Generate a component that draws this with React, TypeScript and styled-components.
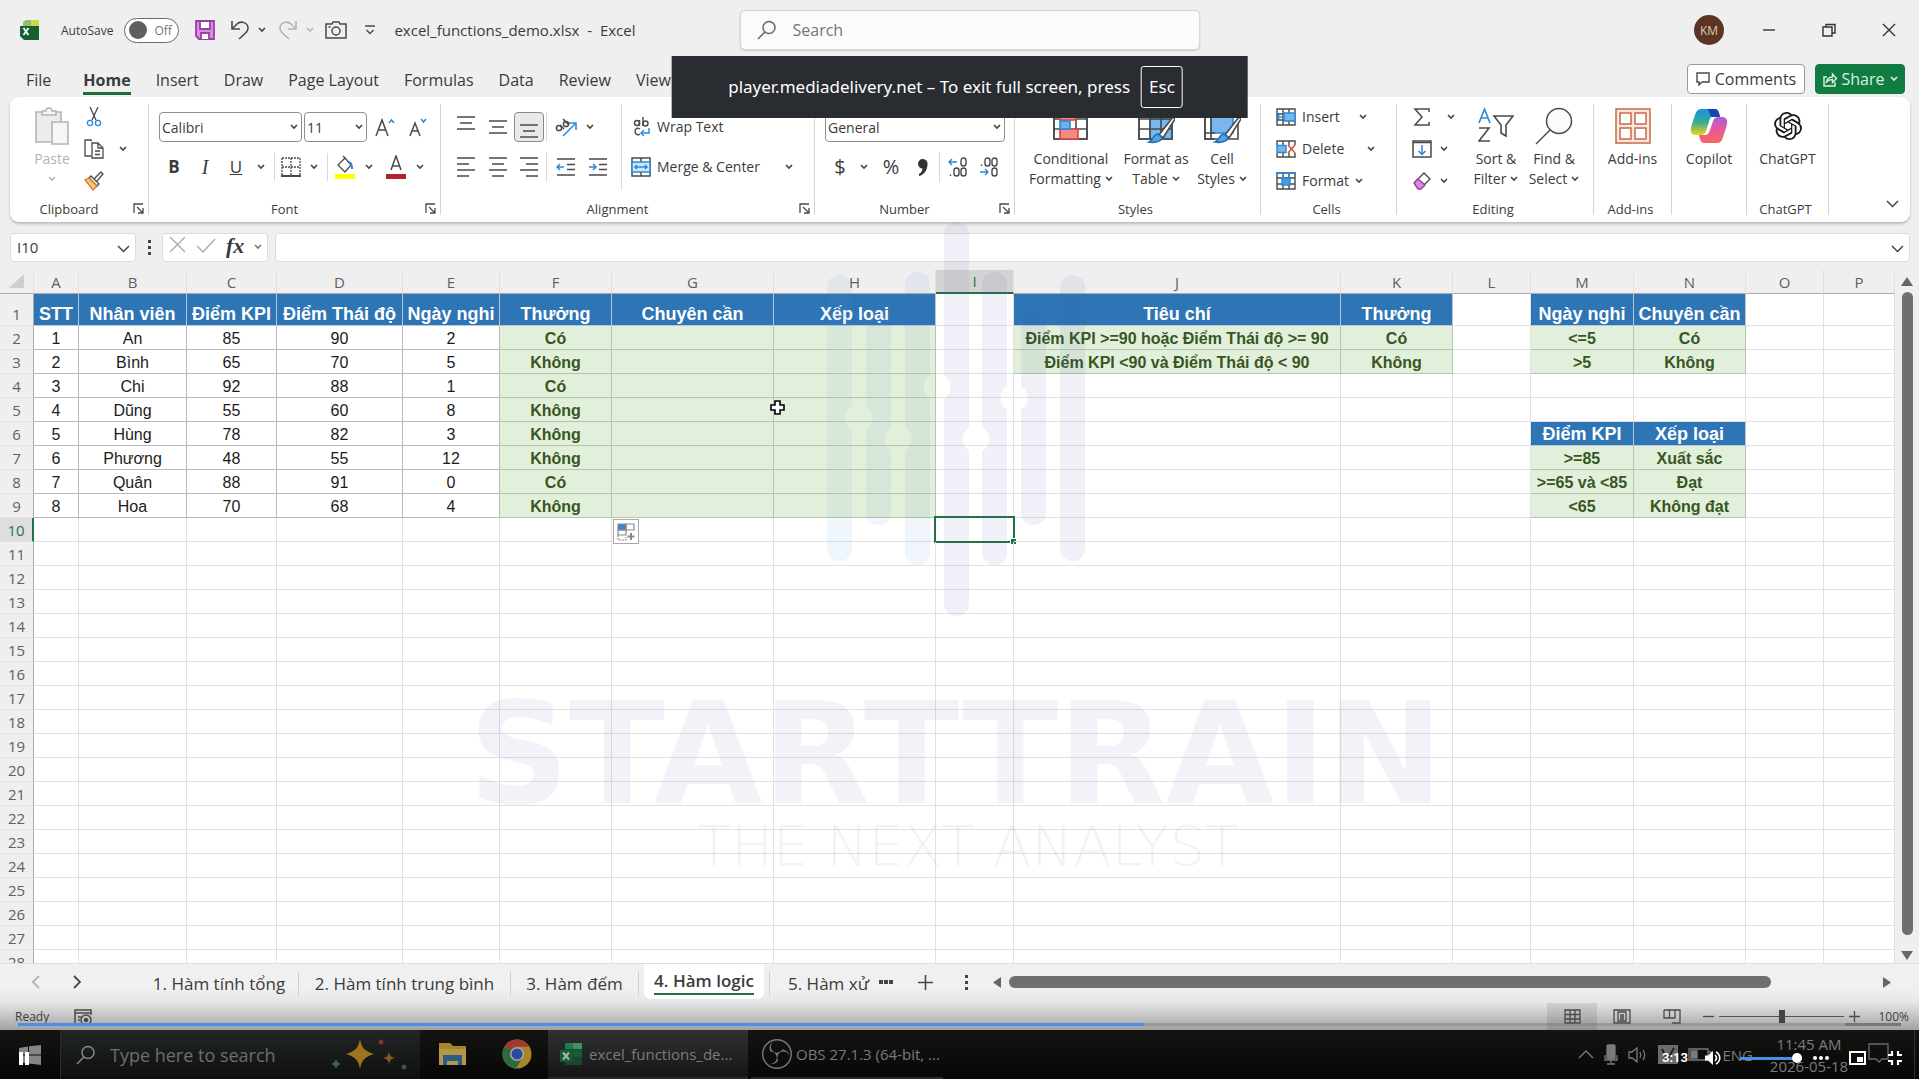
import React from 'react';
import styled, { createGlobalStyle, css } from 'styled-components';
import { SiOpenai, SiObsstudio } from 'react-icons/si';

const UI = '"Open Sans", "Noto Sans", sans-serif';
const CELL = '"Liberation Sans", Arial, sans-serif';
const INK = '#3b3b3b';
const BLUE = '#2b88d8';

const Global = createGlobalStyle`
  *, *::before, *::after { box-sizing: border-box; }
  html, body { margin: 0; padding: 0; }
  body { overflow: hidden; background: #efefef; }
  button, input, select { font: inherit; color: inherit; margin: 0; padding: 0; }
  button { border: 0; background: none; cursor: default; }
  svg { flex-shrink: 0; }
`;

const Screen = styled.div`
  position: relative;
  display: flex;
  flex-direction: column;
  height: 100vh;
  overflow: hidden;
  font-family: ${UI};
  color: ${INK};
  background: #efefef;
`;

/* ---------- title bar ---------- */
const TitleBar = styled.header`
  display: flex;
  align-items: center;
  flex: 0 0 60px;
  padding-left: 20px;
`;
const TitleSide = styled.div<{ $end?: boolean }>`
  display: flex;
  align-items: center;
  flex: 1 1 0;
  justify-content: ${(p) => (p.$end ? 'flex-end' : 'flex-start')};
`;
const AutoSave = styled.label`
  display: flex;
  align-items: center;
  gap: 11px;
  margin: 0 9px 0 17px;
  font-size: 12px;
`;
const Track = styled.span`
  position: relative;
  display: flex;
  align-items: center;
  gap: 7px;
  width: 55px;
  height: 25px;
  padding-left: 4px;
  border: 1px solid #6a6a6a;
  border-radius: 13px;
  background: #fff;
  font-size: 12px;
  color: #777;
`;
const TrackInput = styled.input`
  position: absolute;
  inset: 0;
  opacity: 0;
`;
const Knob = styled.span`
  width: 18px;
  height: 18px;
  border-radius: 50%;
  background: #5f5f5f;
`;
const IconButton = styled.button<{ $w?: number; $h?: number; $on?: boolean }>`
  display: flex;
  align-items: center;
  justify-content: center;
  flex: 0 0 ${(p) => p.$w ?? 30}px;
  height: ${(p) => p.$h ?? 30}px;
  ${(p) =>
    p.$on &&
    css`
      border: 1px solid #8a8a8a;
      border-radius: 4px;
      background: #e9e9e9;
    `}
`;
const FileName = styled.span`
  margin-left: 9px;
  font-size: 15px;
  white-space: pre;
`;
const SearchBox = styled.label`
  display: flex;
  align-items: center;
  gap: 16px;
  flex: 0 1 460px;
  height: 40px;
  padding: 0 16px;
  border: 1px solid #d6d6d6;
  border-radius: 5px;
  background: #fbfbfb;
  box-shadow: 0 1px 2px rgba(0, 0, 0, 0.15);
`;
const SearchInput = styled.input<{ $dark?: boolean }>`
  flex: 1;
  min-width: 0;
  border: 0;
  outline: 0;
  background: none;
  font-size: ${(p) => (p.$dark ? 18 : 16)}px;
  &::placeholder {
    color: ${(p) => (p.$dark ? '#6e6e6e' : '#767676')};
    opacity: 1;
  }
`;
const Avatar = styled.span`
  display: flex;
  align-items: center;
  justify-content: center;
  width: 30px;
  height: 30px;
  margin-right: 15px;
  border-radius: 50%;
  background: #5c3424;
  color: #d9c8bd;
  font-size: 12px;
`;

/* ---------- ribbon tabs ---------- */
const TabRow = styled.nav`
  display: flex;
  align-items: flex-end;
  flex: 0 0 37px;
  padding: 0 14px 2px;
`;
const RibbonTab = styled.button<{ $active?: boolean; $first?: boolean }>`
  padding: 0 12px;
  margin-right: ${(p) => (p.$first ? 8 : 1)}px;
  font-size: 16px;
  line-height: 24px;
  font-weight: ${(p) => (p.$active ? 700 : 400)};
  white-space: nowrap;
  span {
    display: block;
    border-bottom: 3px solid ${(p) => (p.$active ? '#1e6b3c' : 'transparent')};
  }
`;
const Actions = styled.div`
  display: flex;
  gap: 10px;
  margin-left: auto;
`;
const ActionButton = styled.button<{ $primary?: boolean }>`
  display: flex;
  align-items: center;
  justify-content: center;
  gap: 5px;
  width: ${(p) => (p.$primary ? 90 : 118)}px;
  height: 30px;
  margin-bottom: 1px;
  border: 1px solid ${(p) => (p.$primary ? '#107c41' : '#9a9a9a')};
  border-radius: 4px;
  background: ${(p) => (p.$primary ? '#107c41' : '#fff')};
  color: ${(p) => (p.$primary ? '#d9f2e2' : INK)};
  font-size: 16px;
`;

/* ---------- ribbon ---------- */
const Ribbon = styled.section`
  display: flex;
  flex: 0 0 125px;
  margin: 0 9px 0 10px;
  padding: 7px 0;
  border-radius: 9px;
  background: #fff;
  box-shadow: 0 2px 3px rgba(0, 0, 0, 0.22);
`;
const Group = styled.div<{ $w: number }>`
  display: flex;
  flex-direction: column;
  flex: 0 0 ${(p) => p.$w}px;
  border-right: 1px solid #d4d4d4;
`;
const GroupBody = styled.div<{ $pad?: number; $center?: boolean }>`
  display: flex;
  flex: 1;
  padding-left: ${(p) => p.$pad ?? 0}px;
  justify-content: ${(p) => (p.$center ? 'center' : 'flex-start')};
`;
const GroupFoot = styled.div`
  display: flex;
  align-items: center;
  gap: 5px;
  height: 12px;
  padding-right: 4px;
  font-size: 13px;
  line-height: 12px;
  span {
    flex: 1;
    text-align: center;
  }
`;
const Two = styled.div`
  display: flex;
  flex-direction: column;
  gap: 10px;
  padding-top: 8px;
`;
const Three = styled.div`
  display: flex;
  flex-direction: column;
  gap: 6px;
`;
const Line = styled.div<{ $h?: number; $gap?: number }>`
  display: flex;
  align-items: center;
  height: ${(p) => p.$h ?? 30}px;
  gap: ${(p) => p.$gap ?? 0}px;
`;
const Rule = styled.i<{ $h?: number; $m?: number }>`
  width: 1px;
  height: ${(p) => p.$h ?? 30}px;
  margin: 0 ${(p) => p.$m ?? 3}px;
  background: #d9d9d9;
`;
const ComboBox = styled.span<{ $w: number }>`
  position: relative;
  width: ${(p) => p.$w}px;
  height: 30px;
  svg {
    position: absolute;
    right: 4px;
    top: 12px;
    pointer-events: none;
  }
`;
const Combo = styled.select`
  appearance: none;
  width: 100%;
  height: 100%;
  padding: 0 2px;
  border: 1px solid #8f8f8f;
  border-radius: 4px;
  background: #fff;
  font-size: 14px;
  outline: 0;
`;
const TextButton = styled.button`
  display: flex;
  align-items: center;
  gap: 6px;
  font-size: 14px;
  line-height: 26px;
  white-space: nowrap;
`;
const BigButton = styled.button<{ $w: number; $faded?: boolean }>`
  display: flex;
  flex-direction: column;
  align-items: center;
  width: ${(p) => p.$w}px;
  padding-top: 4px;
  font-size: 14px;
  line-height: 20px;
  white-space: nowrap;
  color: ${(p) => (p.$faded ? '#b3b3b3' : INK)};
`;
const BigIcon = styled.span`
  display: flex;
  align-items: center;
  justify-content: center;
  height: 36px;
  margin-bottom: 5px;
`;
const BigLine = styled.span`
  display: flex;
  align-items: center;
  gap: 4px;
  height: 20px;
`;
const Glyph = styled.span<{ $b?: boolean; $i?: boolean; $u?: boolean; $size?: number }>`
  font-size: ${(p) => p.$size ?? 17}px;
  line-height: 20px;
  font-weight: ${(p) => (p.$b ? 700 : 400)};
  font-style: ${(p) => (p.$i ? 'italic' : 'normal')};
  font-family: ${(p) => (p.$i ? '"Liberation Serif", serif' : UI)};
  text-decoration: ${(p) => (p.$u ? 'underline' : 'none')};
`;
const Collapse = styled.button`
  align-self: flex-end;
  margin: 0 11px 2px auto;
`;

/* ---------- formula bar ---------- */
const FormulaRow = styled.div`
  display: flex;
  align-items: center;
  flex: 0 0 48px;
  padding: 2px 9px 0 10px;
`;
const Field = styled.div<{ $w?: number; $m?: number }>`
  display: flex;
  align-items: center;
  flex: ${(p) => (p.$w ? `0 0 ${p.$w}px` : '1 1 0')};
  min-width: 0;
  height: 29px;
  margin-right: ${(p) => p.$m ?? 0}px;
  padding: 0 5px 0 6px;
  border: 1px solid #dcdcdc;
  border-radius: 4px;
  background: #fff;
`;
const FieldInput = styled.input`
  flex: 1;
  min-width: 0;
  border: 0;
  outline: 0;
  background: none;
  font-size: 15px;
`;
const Dots = styled.span`
  display: flex;
  flex-direction: column;
  gap: 3px;
  i {
    width: 3px;
    height: 3px;
    background: #444;
  }
`;
const DotsSlot = styled.span<{ $w?: number }>`
  display: flex;
  justify-content: center;
  flex: 0 0 ${(p) => p.$w ?? 26}px;
`;

/* ---------- sheet ---------- */
const SheetArea = styled.main`
  display: flex;
  flex: 1 1 0;
  min-height: 0;
`;
const SheetView = styled.div`
  position: relative;
  flex: 1;
  min-width: 0;
  overflow: hidden;
  background: #fff;
`;
const Sheet = styled.table`
  width: 100%;
  table-layout: fixed;
  border-collapse: separate;
  border-spacing: 0;
`;
const ColHead = styled.th<{ $sel?: boolean }>`
  height: 24px;
  padding: 0;
  background: ${(p) => (p.$sel ? '#d3d3d3' : '#efefef')};
  color: ${(p) => (p.$sel ? '#217346' : '#5f5f5f')};
  border-right: 1px solid #e0e0e0;
  border-bottom: ${(p) => (p.$sel ? '2px solid #217346' : '1px solid #ababab')};
  font: 400 15px/22px ${UI};
`;
const RowHead = styled.th<{ $sel?: boolean; $tall?: boolean }>`
  height: ${(p) => (p.$tall ? 32 : 24)}px;
  padding: 0;
  background: ${(p) => (p.$sel ? '#dedede' : '#efefef')};
  color: ${(p) => (p.$sel ? '#217346' : '#5f5f5f')};
  border-right: ${(p) => (p.$sel ? '2px solid #217346' : '1px solid #ababab')};
  border-bottom: 1px solid #e2e2e2;
  font: 400 15px/22px ${UI};
  vertical-align: ${(p) => (p.$tall ? 'bottom' : 'middle')};
`;
type Kind = 'blank' | 'plain' | 'head' | 'green';
const Cell = styled.td<{ $kind: Kind; $tall?: boolean }>`
  position: relative;
  padding: 0;
  border-right: 1px solid #e1e1e1;
  border-bottom: 1px solid #e1e1e1;
  font: 400 16px/22px ${CELL};
  color: #1b1b1b;
  text-align: center;
  vertical-align: ${(p) => (p.$tall ? 'bottom' : 'middle')};
  white-space: nowrap;
  ${(p) =>
    p.$kind === 'plain' &&
    css`
      padding-top: 2px;
      line-height: 21px;
      border-color: #b9b9b9;
    `}
  ${(p) =>
    p.$kind === 'head' &&
    css`
      border-color: #b7c7d8;
      background: #2e75b6;
      color: #fff;
      font-size: 18px;
      font-weight: 700;
    `}
  ${(p) =>
    p.$kind === 'green' &&
    css`
      padding-top: 2px;
      line-height: 21px;
      border-color: #b8c4b2;
      background: #e2efda;
      color: #375623;
      font-weight: 700;
    `}
`;
const Selection = styled.span`
  position: absolute;
  inset: -2px;
  border: 2px solid #217346;
  &::after {
    content: '';
    position: absolute;
    right: -3px;
    bottom: -3px;
    width: 6px;
    height: 6px;
    border-top: 1px solid #fff;
    border-left: 1px solid #fff;
    background: #217346;
  }
`;
const PasteTag = styled.span`
  position: absolute;
  left: 1px;
  top: 1px;
  z-index: 1;
  display: flex;
  width: 26px;
  height: 25px;
  align-items: center;
  justify-content: center;
  border: 1px solid #a9a9a9;
  background: #fff;
`;
const Pointer = styled.svg`
  position: absolute;
  left: -5px;
  top: 1px;
  z-index: 2;
`;
const VScroll = styled.div`
  display: flex;
  flex-direction: column;
  align-items: center;
  flex: 0 0 24px;
  padding: 7px 0 3px;
`;
const VThumb = styled.div`
  flex: 1;
  width: 11px;
  margin: 6px 0 16px;
  border-radius: 6px;
  background: #6f6f6f;
`;

/* ---------- sheet tabs ---------- */
const TabsBar = styled.div`
  display: flex;
  align-items: flex-start;
  flex: 0 0 40px;
  background: linear-gradient(#f0f0f0 60%, #e6e6e6);
  border-top: 1px solid #dedede;
`;
const NavPair = styled.div`
  display: flex;
  padding: 3px 0 0 15px;
  width: 140px;
`;
const SheetTab = styled.button<{ $w: number; $active?: boolean }>`
  display: flex;
  align-items: center;
  justify-content: center;
  width: ${(p) => p.$w}px;
  height: ${(p) => (p.$active ? 35 : 24)}px;
  margin: ${(p) => (p.$active ? '0 5px' : '8px 0 0')};
  border-right: ${(p) => (p.$active ? '0' : '1px solid #cfcfcf')};
  border-radius: ${(p) => (p.$active ? '0 0 6px 6px' : '0')};
  background: ${(p) => (p.$active ? '#fff' : 'none')};
  font-size: 17px;
  line-height: 24px;
  font-weight: ${(p) => (p.$active ? 600 : 400)};
  white-space: nowrap;
  span {
    border-bottom: ${(p) => (p.$active ? '2px solid #217346' : '0')};
  }
`;
const CutTab = styled.button`
  height: 24px;
  margin-top: 8px;
  padding-left: 18px;
  border-left: 1px solid #cfcfcf;
  font-size: 17px;
  line-height: 24px;
  white-space: nowrap;
`;
const TabTools = styled.div`
  display: flex;
  align-items: center;
  flex: 1;
  height: 36px;
`;
const HTrack = styled.div`
  flex: 1;
  margin: 0 8px;
`;
const HThumb = styled.div`
  width: 88%;
  height: 12px;
  border-radius: 6px;
  background: #6f6f6f;
`;

/* ---------- status bar ---------- */
const StatusBar = styled.footer`
  display: flex;
  align-items: center;
  flex: 0 0 27px;
  padding: 0 10px 0 15px;
  background: linear-gradient(#e4e4e4, #bdbdbd 60%, #a2a2a2);
  font-size: 12px;
  color: #3d3d3d;
  gap: 25px;
`;
const Views = styled.div`
  display: flex;
  align-items: center;
  height: 27px;
  margin-left: auto;
`;
const ViewButton = styled.button<{ $on?: boolean }>`
  display: flex;
  align-items: center;
  justify-content: center;
  width: 50px;
  height: 27px;
  background: ${(p) => (p.$on ? 'rgba(0,0,0,.09)' : 'none')};
`;
const Zoom = styled.label`
  display: flex;
  align-items: center;
  gap: 5px;
`;
const ZoomRange = styled.input`
  appearance: none;
  width: 125px;
  height: 14px;
  background: linear-gradient(#555, #555) center / 100% 1px no-repeat;
  &::-webkit-slider-thumb {
    appearance: none;
    width: 6px;
    height: 13px;
    background: #444;
  }
`;
const ZoomValue = styled.span`
  margin-left: 13px;
`;

/* ---------- taskbar ---------- */
const Taskbar = styled.div`
  display: flex;
  flex: 0 0 49px;
  background: linear-gradient(#141412, #070707);
  color: #7b7b7b;
`;
const StartButton = styled.button`
  flex: 0 0 60px;
  display: flex;
  align-items: center;
  justify-content: center;
`;
const TaskSearch = styled.label`
  display: flex;
  align-items: center;
  gap: 14px;
  flex: 0 0 360px;
  min-width: 0;
  padding: 0 13px 0 15px;
  border-left: 1px solid #2a2c2c;
  background: linear-gradient(#232626, #0e0f0f);
`;
const TaskButton = styled.button<{ $w: number; $active?: boolean; $left?: boolean }>`
  display: flex;
  align-items: center;
  justify-content: ${(p) => (p.$left ? 'flex-start' : 'center')};
  gap: ${(p) => (p.$active ? 6 : 4)}px;
  flex: 0 0 ${(p) => p.$w}px;
  min-width: 0;
  padding: 0 ${(p) => (p.$left ? 11 : 0)}px;
  background: ${(p) => (p.$active ? 'linear-gradient(#303232, #151615)' : 'none')};
  border-bottom: 2px solid ${(p) => (p.$left ? '#242b28' : 'transparent')};
  font-size: 15px;
  white-space: nowrap;
`;
const Tray = styled.div`
  display: flex;
  align-items: center;
  margin-left: auto;
  padding-right: 4px;
  gap: 10px;
  font-size: 15px;
`;
const Clock = styled.div`
  width: 92px;
  text-align: center;
  line-height: 22px;
`;
const TrayEnd = styled.div`
  height: 49px;
  padding: 13px 25px 0 3px;
  border-right: 1px solid #333;
`;

/* ---------- video player layer ---------- */
const Watermark = styled.div`
  position: absolute;
  top: 222px;
  left: 0;
  right: 0;
  display: flex;
  flex-direction: column;
  align-items: center;
  padding-right: 7px;
  color: rgba(62, 78, 170, 0.065);
  pointer-events: none;
  font-family: 'DejaVu Sans', sans-serif;
  white-space: nowrap;
`;
const MarkName = styled.div`
  margin-top: 72px;
  font-size: 140px;
  line-height: 134px;
  font-weight: 700;
`;
const MarkLine = styled.div`
  padding-left: 24px;
  font-size: 56px;
  line-height: 48px;
  font-weight: 200;
`;
const Toast = styled.div`
  position: absolute;
  top: 56px;
  left: 50%;
  transform: translateX(-50%);
  display: flex;
  align-items: center;
  gap: 11px;
  height: 62px;
  padding: 0 65px 0 57px;
  background: #292c31;
  color: #fff;
  font: 400 17px/24px 'Noto Sans', 'Open Sans', sans-serif;
  white-space: nowrap;
  kbd {
    display: flex;
    align-items: center;
    height: 42px;
    padding: 0 7px;
    border: 1px solid #fff;
    border-radius: 3px;
    font: inherit;
  }
`;
const Seek = styled.div`
  position: absolute;
  left: 18px;
  right: 18px;
  bottom: 53px;
  height: 3px;
  background: linear-gradient(90deg, rgba(90, 90, 90, 0.25) 97%, #777 97%);
`;
const Played = styled.div`
  height: 3px;
  background: #4a8fe7;
`;
const Player = styled.div`
  position: absolute;
  left: 18px;
  right: 17px;
  bottom: 12px;
  display: flex;
  align-items: center;
  height: 18px;
  color: #fff;
  font: 700 13px/18px Roboto, sans-serif;
`;
const PlayerButton = styled.button`
  display: flex;
`;
const PlayerRight = styled.div`
  display: flex;
  align-items: center;
  margin-left: auto;
`;
const Volume = styled.input`
  appearance: none;
  width: 62px;
  height: 12px;
  margin: 0 11px 0 19px;
  background: linear-gradient(#4a8fe7, #4a8fe7) center / 100% 3px no-repeat;
  &::-webkit-slider-thumb {
    appearance: none;
    width: 10px;
    height: 10px;
    border-radius: 50%;
    background: #fff;
  }
`;
const Gap = styled.i<{ $w: number }>`
  width: ${(p) => p.$w}px;
`;

/* ---------- icons ---------- */
type IconProps = { w: number; h?: number; c?: string; s?: number; children: React.ReactNode };
const Icon = ({ w, h, c = '#4a4a4a', s = 1.3, children }: IconProps) => (
  <svg width={w} height={h ?? w} viewBox={`0 0 ${w} ${h ?? w}`} fill="none" stroke={c} strokeWidth={s} aria-hidden="true">
    {children}
  </svg>
);
const Chev = ({ c = '#444', big = false }: { c?: string; big?: boolean }) =>
  big ? (
    <Icon w={13} h={8} c={c} s={1.5}><path d="M1 1l5.500 5.500L12 1" /></Icon>
  ) : (
    <Icon w={8} h={6} c={c} s={1.6}><path d="M1 1l3 3 3-3" /></Icon>
  );
const Drop = ({ w = 18, label, c }: { w?: number; label: string; c?: string }) => (
  <IconButton $w={w} $h={26} aria-label={label}><Chev c={c} /></IconButton>
);
const Launcher = () => (
  <button aria-label="Dialog launcher">
    <Icon w={11} h={11}><path d="M1 10V1h9M4 4l6 6M10 5v5H5" /></Icon>
  </button>
);
const Excel = ({ dim }: { dim?: boolean }) => (
  <svg width="24" height="26" viewBox="0 0 24 26" opacity={dim ? 0.65 : 1} aria-hidden="true">
    <path d="M6 2h9v6H6z" fill="#21a366" /><path d="M14 2h9v7h-9z" fill="#4fc878" />
    <path d="M6 8h17v16H6z" fill="#185c37" /><path d="M14 9h9v7h-9z" fill="#107c41" />
    <path d="M1 9h12v12H1z" fill="#107c41" /><path d="M4 11.500l6 7M10 11.500l-6 7" stroke="#fff" strokeWidth="2" />
  </svg>
);
const TitleExcel = () => (
  <svg width="24" height="26" viewBox="0 0 24 26" aria-hidden="true">
    <path d="M3 5l3-2h11l2 3v5H3z" fill="#8fbf6a" /><path d="M11 3h8v6h-8z" fill="#c5dc4a" />
    <path d="M0 9h19v14H4l-4-4z" fill="#14602f" /><path d="M3.500 11l5 7M8.500 11l-5 7" stroke="#fff" strokeWidth="1.800" />
  </svg>
);
const Lines = ({ rows }: { rows: [number, number][] }) => (
  <Icon w={20} h={22} s={1.5}>
    {rows.map(([a, b], i) => <path key={i} d={`M${a} ${11 - (rows.length - 1) * 3 + i * 6}H${b}`} />)}
  </Icon>
);
const Indent = ({ dir }: { dir: 'in' | 'out' }) => (
  <Icon w={20} h={20} s={1.5}>
    <path d="M1 2h18M11 7.500h8M11 12.500h8M1 18h18" />
    <path stroke={BLUE} d={dir === 'out' ? 'M8 10H1M4 7l-3 3 3 3' : 'M1 10h7M5 7l3 3-3 3'} />
  </Icon>
);
const GridIcon = ({ kind }: { kind: 'insert' | 'delete' | 'format' }) => (
  <Icon w={20} h={20} s={1.4}>
    <path d="M1 2h18v16H1zM7 2v16M13 2v16M1 7h18M1 13h18" />
    {kind === 'insert' && <><path d="M8 6h11v8H8z" fill="#7ab5e6" stroke={BLUE} /><path d="M9 10H1M4 7l-3 3 3 3" stroke={BLUE} /></>}
    {kind === 'delete' && <><path d="M0 6h20v8H0z" fill="#fff" stroke="none" /><path d="M1 6.500h9v7H1z" fill="#7ab5e6" stroke={BLUE} /><path d="M12 6l7 8M19 6l-7 8" stroke="#d04a2b" /></>}
    {kind === 'format' && <><path d="M6 7h8v7H6z" fill="#4a9be0" stroke={BLUE} /><path d="M1 1v3M19 1v3M1 2h18" stroke={BLUE} /></>}
  </Icon>
);
const StyleGrid = ({ kind }: { kind: 'cond' | 'table' | 'cell' }) => (
  <Icon w={38} h={36} s={1.6}>
    <path d="M2 1h33v30H2z" fill="#fff" />
    {kind === 'table' && <path d="M13 11h22v20H13z" fill="#7ab5ee" stroke={BLUE} />}
    {kind === 'cell' && <path d="M8 7h22v18H8z" fill="#7ab5ee" stroke={BLUE} />}
    <path d={kind === 'cell' ? 'M2 1h33M2 1v30h10M8 1v30M2 25h10' : 'M2 1h33v30H2zM13 1v30M24 1v30M2 11h33M2 21h33'} />
    {kind === 'cond' && <><path d="M8 1h16v11H8zM8 21h18v10H8z" fill="#f38b84" stroke="#d9453b" /><path d="M8 13h10v8H8z" fill="#6fb0ea" stroke={BLUE} /></>}
    {kind !== 'cond' && (
      <><path d="M22 27L36 9l2 2-12 19z" fill="#fff" /><path d="M12 34c4 1 13 0 13-5l-4-3c-5 0-4 6-9 8z" fill="#5aa2e2" stroke="#1f6fb5" /></>
    )}
  </Icon>
);
const SearchGlyph = ({ size = 20, c = '#666' }: { size?: number; c?: string }) => (
  <svg width={size} height={size} viewBox="0 0 20 20" fill="none" stroke={c} strokeWidth="1.5" aria-hidden="true">
    <circle cx="12" cy="7.500" r="6" /><path d="M7.800 12L1 19" />
  </svg>
);
const WindowGlyph = ({ d }: { d: string }) => <Icon w={14} s={1.4} c="#333"><path d={d} /></Icon>;

/* ---------- data ---------- */
const COLS: [string, number][] = [
  ['A', 45], ['B', 108], ['C', 90], ['D', 126], ['E', 97], ['F', 112], ['G', 162], ['H', 162],
  ['I', 78], ['J', 327], ['K', 112], ['L', 78], ['M', 103], ['N', 112], ['O', 78], ['P', 0],
];
const STAFF: string[][] = [
  ['1', 'An', '85', '90', '2', 'Có'],
  ['2', 'Bình', '65', '70', '5', 'Không'],
  ['3', 'Chi', '92', '88', '1', 'Có'],
  ['4', 'Dũng', '55', '60', '8', 'Không'],
  ['5', 'Hùng', '78', '82', '3', 'Không'],
  ['6', 'Phương', '48', '55', '12', 'Không'],
  ['7', 'Quân', '88', '91', '0', 'Có'],
  ['8', 'Hoa', '70', '68', '4', 'Không'],
];
const cells: Record<string, [string, Kind]> = {};
['STT', 'Nhân viên', 'Điểm KPI', 'Điểm Thái độ', 'Ngày nghỉ', 'Thưởng', 'Chuyên cần', 'Xếp loại'].forEach((t, i) => {
  cells[`${COLS[i][0]}1`] = [t, 'head'];
});
STAFF.forEach((row, r) => {
  row.forEach((t, i) => { cells[`${COLS[i][0]}${r + 2}`] = [t, i === 5 ? 'green' : 'plain']; });
  cells[`G${r + 2}`] = ['', 'green'];
  cells[`H${r + 2}`] = ['', 'green'];
});
Object.assign(cells, {
  J1: ['Tiêu chí', 'head'], K1: ['Thưởng', 'head'],
  J2: ['Điểm KPI >=90 hoặc Điểm Thái độ >= 90', 'green'], K2: ['Có', 'green'],
  J3: ['Điểm KPI <90 và Điểm Thái độ < 90', 'green'], K3: ['Không', 'green'],
  M1: ['Ngày nghỉ', 'head'], N1: ['Chuyên cần', 'head'],
  M2: ['<=5', 'green'], N2: ['Có', 'green'],
  M3: ['>5', 'green'], N3: ['Không', 'green'],
  M6: ['Điểm KPI', 'head'], N6: ['Xếp loại', 'head'],
  M7: ['>=85', 'green'], N7: ['Xuất sắc', 'green'],
  M8: ['>=65 và <85', 'green'], N8: ['Đạt', 'green'],
  M9: ['<65', 'green'], N9: ['Không đạt', 'green'],
});
const ROWS = Array.from({ length: 28 }, (_, i) => i + 1);
const MENU = ['File', 'Home', 'Insert', 'Draw', 'Page Layout', 'Formulas', 'Data', 'Review', 'View'];

/* ---------- sections ---------- */
const Title = () => (
  <TitleBar>
    <TitleSide>
      <TitleExcel />
      <AutoSave>
        AutoSave
        <Track><TrackInput type="checkbox" role="switch" /><Knob />Off</Track>
      </AutoSave>
      <IconButton $w={34} aria-label="Save">
        <Icon w={20} c="#9b3fa5" s={1.8}><path d="M1 1h18v18H4l-3-3z" fill="#d58fdc" /><path d="M5 1h10v8H5zM6 19v-6h8v6" fill="#fff" /></Icon>
      </IconButton>
      <Gap $w={3} />
      <IconButton aria-label="Undo"><Icon w={20} s={1.6}><path d="M2 1v8h8M2 9l5-5c4-4 11-1 11 4 0 3-1 4-9 11" /></Icon></IconButton>
      <Drop w={14} label="Undo history" />
      <Gap $w={4} />
      <IconButton aria-label="Redo"><Icon w={20} s={1.6} c="#b5b5b5"><path d="M18 1v8h-8M18 9l-5-5C9 0 2 3 2 8c0 3 1 4 9 11" /></Icon></IconButton>
      <Drop w={14} label="Redo history" c="#b5b5b5" />
      <Gap $w={2} />
      <IconButton $w={34} aria-label="Camera">
        <Icon w={22} h={18} s={1.5}><path d="M1 3h6l1-2h6l1 2h6v14H1z" /><circle cx="11" cy="10" r="4" /><path d="M3.500 6h2" /></Icon>
      </IconButton>
      <Gap $w={2} />
      <IconButton aria-label="Customize toolbar"><Icon w={10} h={10} s={1.5}><path d="M0 1h10M1.500 5L5 8.500 8.500 5" /></Icon></IconButton>
      <FileName>{'excel_functions_demo.xlsx  -  Excel'}</FileName>
    </TitleSide>
    <SearchBox>
      <SearchGlyph />
      <SearchInput placeholder="Search" aria-label="Search" />
    </SearchBox>
    <TitleSide $end>
      <Avatar>KM</Avatar>
      <IconButton $w={60} aria-label="Minimize"><WindowGlyph d="M1 7h12" /></IconButton>
      <IconButton $w={60} aria-label="Restore"><WindowGlyph d="M1 4h9v9H1zM4 4V1.500h9V10h-3" /></IconButton>
      <IconButton $w={60} aria-label="Close"><WindowGlyph d="M1 1l12 12M13 1L1 13" /></IconButton>
    </TitleSide>
  </TitleBar>
);

const MenuRow = () => (
  <TabRow>
    {MENU.map((m, i) => (
      <RibbonTab key={m} $active={m === 'Home'} $first={i === 0}><span>{m}</span></RibbonTab>
    ))}
    <Actions>
      <ActionButton>
        <Icon w={14} h={14} s={1.4}><path d="M1 1h12v9H6l-3 3v-3H1z" /></Icon>Comments
      </ActionButton>
      <ActionButton $primary>
        <Icon w={14} h={15} s={1.4} c="#d9f2e2"><path d="M4 5H1v9h11v-4M3.500 10c1-4 3-5 6-5V2l4 4.500-4 4V7.500c-3 0-4 .5-6 2.500z" /></Icon>
        Share<Chev c="#d9f2e2" />
      </ActionButton>
    </Actions>
  </TabRow>
);

const Foot = ({ name, launch }: { name?: string; launch?: boolean }) => (
  <GroupFoot><span>{name}</span>{launch && <Launcher />}</GroupFoot>
);

const RibbonBar = () => (
  <Ribbon>
    <Group $w={139}>
      <GroupBody $pad={18}>
        <BigButton $w={48} $faded>
          <BigIcon>
            <Icon w={36} h={38} c="#b5b5b5" s={1.6}><path d="M2 5h25v30H2z" fill="#ececec" /><path d="M8 8V4h4c0-4 6-4 6 0h4v4z" fill="#f6f6f6" /><path d="M18 15h16v22H18z" fill="#f6f6f6" /></Icon>
          </BigIcon>
          Paste
          <BigLine><Chev c="#b5b5b5" /></BigLine>
        </BigButton>
        <Three>
          <Line $h={26}>
            <IconButton $w={36} $h={26} aria-label="Cut">
              <Icon w={16} h={20}><path d="M4 0l6 13M12 0L6 13" /><circle cx="4" cy="16" r="2.600" stroke={BLUE} /><circle cx="12" cy="16" r="2.600" stroke={BLUE} /></Icon>
            </IconButton>
          </Line>
          <Line $h={26}>
            <IconButton $w={36} $h={26} aria-label="Copy">
              <Icon w={20}><path d="M7 17H1V1h6l1 1M8 4h6l5 5v10H8zM14 4v5h5M11 12h5M11 15.500h5" /></Icon>
            </IconButton>
            <Gap $w={2} /><Drop w={18} label="Copy options" />
          </Line>
          <Line $h={26}>
            <IconButton $w={36} $h={26} aria-label="Format Painter">
              <Icon w={20}><path d="M10 8l7-7 2 2-6 7M7 5l8 8-2 2-8-8z" /><path d="M5 7L1 9l8 10 4-4z" fill="#f7c27a" stroke="#d97a1c" /></Icon>
            </IconButton>
          </Line>
        </Three>
      </GroupBody>
      <Foot name="Clipboard" launch />
    </Group>

    <Group $w={292}>
      <GroupBody $pad={10}>
        <Two>
          <Line $gap={2}>
            <ComboBox $w={143}><Combo aria-label="Font"><option>Calibri</option></Combo><Chev /></ComboBox>
            <ComboBox $w={63}><Combo aria-label="Font size"><option>11</option></Combo><Chev /></ComboBox>
            <IconButton $w={32} aria-label="Increase font size"><Icon w={20} h={20} s={1.5}><path d="M1 19L7 3l6 16M3 13h8" /><path d="M14 6l2.500-3L19 6" stroke={BLUE} /></Icon></IconButton>
            <IconButton $w={30} aria-label="Decrease font size"><Icon w={18} h={20} s={1.5}><path d="M1 19L6 6l5 13M3 14h6" /><path d="M12 2l2.500 3L17 2" stroke={BLUE} /></Icon></IconButton>
          </Line>
          <Line>
            <IconButton aria-label="Bold"><Glyph $b>B</Glyph></IconButton>
            <IconButton $w={32} aria-label="Italic"><Glyph $i $size={20}>I</Glyph></IconButton>
            <IconButton aria-label="Underline"><Glyph $u>U</Glyph></IconButton>
            <Drop w={20} label="Underline options" />
            <Rule $h={28} $m={3} />
            <IconButton $w={26} aria-label="Borders"><Icon w={20}><path d="M1 1h18v18M1 1v18M10 1v18M1 10h18" strokeDasharray="2 1" /><path d="M0 19h20" strokeWidth="2" /></Icon></IconButton>
            <Drop w={20} label="Border options" />
            <Rule $h={28} $m={3} />
            <IconButton $w={28} aria-label="Fill Color"><Icon w={20} h={24}><path d="M3 10l7-7 6 7-6 7zM8 1l4 4" /><path d="M14 7c3 1 3 4 3 7" stroke={BLUE} strokeWidth="2" /><path d="M0 19h20v5H0z" fill="#ffff00" stroke="none" /></Icon></IconButton>
            <Drop w={20} label="Fill options" />
            <Gap $w={3} />
            <IconButton $w={28} aria-label="Font Color"><Icon w={20} h={24} s={1.5}><path d="M5 15l5-14 5 14M6.500 11h7" /><path d="M0 19h20v5H0z" fill="#b5222a" stroke="none" /></Icon></IconButton>
            <Drop w={20} label="Font color options" />
          </Line>
        </Two>
      </GroupBody>
      <Foot name="Font" launch />
    </Group>

    <Group $w={374}>
      <GroupBody $pad={9}>
        <Two>
          <Line>
            <IconButton $w={32} aria-label="Top Align"><Icon w={20} h={22} s={1.5}><path d="M1 1h18M4 7h12M1 13h18" /></Icon></IconButton>
            <IconButton $w={32} aria-label="Middle Align"><Lines rows={[[1, 19], [4, 16], [1, 19]]} /></IconButton>
            <IconButton $on aria-label="Bottom Align"><Icon w={20} h={22} s={1.5}><path d="M1 9h18M4 15h12M1 21h18" /></Icon></IconButton>
            <Rule $m={2} />
            <IconButton $w={34} aria-label="Orientation"><Icon w={22} h={20} s={1.5}><circle cx="4" cy="11" r="2.600" /><path d="M5 8l4 4M8 2l6 6" /><circle cx="11" cy="7" r="2.600" /><path d="M8 19L20 7M14 6h7v7" stroke={BLUE} /></Icon></IconButton>
            <Drop w={14} label="Orientation options" />
          </Line>
          <Line>
            <IconButton $w={32} aria-label="Align Left"><Lines rows={[[1, 19], [1, 13], [1, 19], [1, 13]]} /></IconButton>
            <IconButton $w={32} aria-label="Center"><Lines rows={[[1, 19], [4, 16], [1, 19], [4, 16]]} /></IconButton>
            <IconButton aria-label="Align Right"><Lines rows={[[1, 19], [7, 19], [1, 19], [7, 19]]} /></IconButton>
            <Rule $m={2} />
            <IconButton $w={34} aria-label="Decrease Indent"><Indent dir="out" /></IconButton>
            <IconButton aria-label="Increase Indent"><Indent dir="in" /></IconButton>
          </Line>
        </Two>
        <Gap $w={5} />
        <Rule $h={86} />
        <Gap $w={6} />
        <Two>
          <Line>
            <TextButton>
              <Icon w={20} h={22} s={1.4}><circle cx="6" cy="7" r="2.500" /><path d="M8.500 4v6M12 1v9" /><circle cx="14.500" cy="7.500" r="2.500" /><path d="M9 13c-3-2-5 0-5 2.500S7 20 9 18" /><path d="M18 12v5h-7M13 14l-3 3 3 3" stroke={BLUE} /></Icon>
              Wrap Text
            </TextButton>
          </Line>
          <Line>
            <TextButton>
              <Icon w={20} h={20} s={1.5}><path d="M1 1h18v18H1zM10 1v4M10 15v4" /><path d="M1 5h18v10H1z" fill="#cfe5f8" stroke={BLUE} /><path d="M4 10h12M6 8l-2 2 2 2M14 8l2 2-2 2" stroke={BLUE} /></Icon>
              Merge &amp; Center
            </TextButton>
            <Gap $w={20} /><Drop label="Merge options" />
          </Line>
        </Two>
      </GroupBody>
      <Foot name="Alignment" launch />
    </Group>

    <Group $w={200}>
      <GroupBody $pad={10}>
        <Two>
          <Line><ComboBox $w={180}><Combo aria-label="Number format"><option>General</option></Combo><Chev /></ComboBox></Line>
          <Line>
            <IconButton aria-label="Accounting format"><Glyph $size={20}>$</Glyph></IconButton>
            <Drop label="Currency options" />
            <IconButton $w={36} aria-label="Percent"><Glyph $size={20}>%</Glyph></IconButton>
            <IconButton $w={28} aria-label="Comma style"><svg width="10" height="17" viewBox="0 0 10 17"><path d="M5 0a4.500 4.500 0 0 1 4.500 5C9.500 11 6 16 1 17v-2c2-1 3.500-3 3.500-5.500A4.600 4.600 0 0 1 5 0z" fill="#333" /></svg></IconButton>
            <Rule $m={2} />
            <IconButton $w={32} aria-label="Increase decimal"><Icon w={20} h={20} s={1.4}><path d="M9 5H1M4 2L1 5l3 3" stroke={BLUE} /><rect x="13" y="1" width="5" height="8" rx="2.500" /><rect x="6" y="11" width="5" height="8" rx="2.500" /><rect x="13" y="11" width="5" height="8" rx="2.500" /><path d="M2.500 19v-1.500" /></Icon></IconButton>
            <IconButton aria-label="Decrease decimal"><Icon w={20} h={20} s={1.4}><path d="M1 15h8M6 12l3 3-3 3" stroke={BLUE} /><rect x="6" y="1" width="5" height="8" rx="2.500" /><rect x="13" y="1" width="5" height="8" rx="2.500" /><rect x="13" y="11" width="5" height="8" rx="2.500" /><path d="M2.500 9V7.500" /></Icon></IconButton>
          </Line>
        </Two>
      </GroupBody>
      <Foot name="Number" launch />
    </Group>

    <Group $w={246}>
      <GroupBody $pad={9}>
        <BigButton $w={94}><BigIcon><StyleGrid kind="cond" /></BigIcon>Conditional<BigLine>Formatting <Chev /></BigLine></BigButton>
        <BigButton $w={76}><BigIcon><StyleGrid kind="table" /></BigIcon>Format as<BigLine>Table <Chev /></BigLine></BigButton>
        <BigButton $w={56}><BigIcon><StyleGrid kind="cell" /></BigIcon>Cell<BigLine>Styles <Chev /></BigLine></BigButton>
      </GroupBody>
      <Foot name="Styles" />
    </Group>

    <Group $w={136}>
      <GroupBody $pad={15}>
        <Three>
          <Line $h={26}><TextButton><GridIcon kind="insert" />Insert</TextButton><Gap $w={14} /><Drop label="Insert options" /></Line>
          <Line $h={26}><TextButton><GridIcon kind="delete" />Delete</TextButton><Gap $w={18} /><Drop label="Delete options" /></Line>
          <Line $h={26}><TextButton><GridIcon kind="format" />Format <Chev /></TextButton></Line>
        </Three>
      </GroupBody>
      <Foot name="Cells" />
    </Group>

    <Group $w={197}>
      <GroupBody $pad={10}>
        <Three>
          <Line $h={26}><IconButton aria-label="AutoSum"><Icon w={18} h={18} s={1.5}><path d="M16 4V1H2l7 8-7 8h14v-3" /></Icon></IconButton><Gap $w={5} /><Drop label="AutoSum options" /></Line>
          <Line $h={26}><IconButton aria-label="Fill"><Icon w={20} h={18} s={1.5}><path d="M1 1h18v16H1z" /><path d="M1 2.500h18" /><path d="M10 5v9M6.500 11l3.500 3.500 3.500-3.500" stroke={BLUE} /></Icon></IconButton><Drop w={14} label="Fill direction" /></Line>
          <Line $h={26}><IconButton aria-label="Clear"><Icon w={20} h={18} s={1.4}><path d="M12 1l6 6-9 9-6-6z" /><path d="M6 7l-4 4 4 6h3l4-4z" fill="#d98be0" stroke="#9b3fa5" /></Icon></IconButton><Drop w={14} label="Clear options" /></Line>
        </Three>
        <Gap $w={7} />
        <BigButton $w={58}>
          <BigIcon><Icon w={36} h={36} s={1.6}><path d="M1 15L6.500 1 12 15M3 10h7" stroke={BLUE} /><path d="M1 20h10L1 33h11" /><path d="M16 8h19l-7 9v11l-5-3v-8z" /></Icon></BigIcon>
          Sort &amp;<BigLine>Filter <Chev /></BigLine>
        </BigButton>
        <BigButton $w={58}>
          <BigIcon><Icon w={38} h={38} s={1.5}><circle cx="24" cy="14" r="12.500" fill="#fbfbfb" /><path d="M15 23L1 37" /></Icon></BigIcon>
          Find &amp;<BigLine>Select <Chev /></BigLine>
        </BigButton>
      </GroupBody>
      <Foot name="Editing" />
    </Group>

    <Group $w={78}>
      <GroupBody $center>
        <BigButton $w={76}>
          <BigIcon><Icon w={36} c="#c8694a" s={1.5}><path d="M1 1h34v34H1z" fill="#fbe9e1" /><path d="M5 5h11v11H5zM20 5h11v11H20zM5 20h11v11H5zM20 20h11v11H20z" fill="#fff" /></Icon></BigIcon>
          Add-ins
        </BigButton>
      </GroupBody>
      <Foot name="Add-ins" />
    </Group>
    <Group $w={75}>
      <GroupBody $center>
        <BigButton $w={72}>
          <BigIcon>
            <svg width="38" height="36" viewBox="0 0 38 36" aria-hidden="true">
              <defs>
                <linearGradient id="cpA" x1="0" y1="0" x2="0" y2="1"><stop offset="0" stopColor="#1e8fe0" /><stop offset=".5" stopColor="#2fae9b" /><stop offset="1" stopColor="#f6d20f" /></linearGradient>
                <linearGradient id="cpB" x1="0" y1="0" x2="0" y2="1"><stop offset="0" stopColor="#a65fd8" /><stop offset=".5" stopColor="#e85a9a" /><stop offset="1" stopColor="#f5685e" /></linearGradient>
              </defs>
              <path d="M11 1h14c3 0 4 3 5 7h-5c-4 0-5 2-6 6l-3 9c-1 3-3 4-6 4H6c-6 0-6-5-4-11l3-9c1-4 3-6 6-6z" fill="url(#cpA)" />
              <path d="M20 1h5c3 0 4 3 5 8h-8c-2 0-2-6-5-8z" fill="#1746b8" />
              <path d="M27 35H14c-3 0-4-3-5-8h5c4 0 5-2 6-5l3-9c1-3 3-4 6-4h3c6 0 6 5 4 11l-3 9c-1 4-3 6-6 6z" fill="url(#cpB)" />
            </svg>
          </BigIcon>
          Copilot
        </BigButton>
      </GroupBody>
      <Foot />
    </Group>
    <Group $w={82}>
      <GroupBody $center>
        <BigButton $w={78}><BigIcon><SiOpenai size={28} color="#1c1c1c" /></BigIcon>ChatGPT</BigButton>
      </GroupBody>
      <Foot name="ChatGPT" />
    </Group>
    <Collapse aria-label="Collapse ribbon"><Chev big /></Collapse>
  </Ribbon>
);

const FormulaBar = () => (
  <FormulaRow>
    <Field $w={126}>
      <FieldInput aria-label="Name box" defaultValue="I10" />
      <button aria-label="Name list"><Chev big /></button>
    </Field>
    <DotsSlot><Dots><i /><i /><i /></Dots></DotsSlot>
    <Field $w={106} $m={7}>
      <Line $gap={10}>
        <button aria-label="Cancel"><Icon w={17} c="#b0b0b0" s={1.5}><path d="M1 1l15 15M16 1L1 16" /></Icon></button>
        <button aria-label="Enter"><Icon w={20} h={15} c="#b0b0b0" s={1.5}><path d="M1 8l6 6L19 1" /></Icon></button>
        <button aria-label="Insert function"><Glyph $b $i $size={22}>fx</Glyph></button>
        <Chev c="#777" />
      </Line>
    </Field>
    <Field>
      <FieldInput aria-label="Formula" />
      <button aria-label="Expand formula bar"><Chev big /></button>
    </Field>
  </FormulaRow>
);

const Grid = () => (
  <SheetArea>
    <SheetView>
      <Sheet>
        <colgroup>
          <col width={34} />
          {COLS.map(([c, w]) => <col key={c} width={w || undefined} />)}
        </colgroup>
        <thead>
          <tr>
            <ColHead aria-label="Select all"><svg width="15" height="14" viewBox="0 0 15 14"><path d="M15 0v14H0z" fill="#cfcfcf" /></svg></ColHead>
            {COLS.map(([c]) => <ColHead key={c} scope="col" $sel={c === 'I'}>{c}</ColHead>)}
          </tr>
        </thead>
        <tbody>
          {ROWS.map((r) => (
            <tr key={r}>
              <RowHead scope="row" $sel={r === 10} $tall={r === 1}>{r}</RowHead>
              {COLS.map(([c]) => {
                const [text, kind] = cells[`${c}${r}`] ?? ['', 'blank' as Kind];
                return (
                  <Cell key={c} $kind={kind} $tall={r === 1}>
                    {text}
                    {c === 'I' && r === 10 && <Selection />}
                    {c === 'G' && r === 10 && (
                      <PasteTag>
                        <Icon w={18} h={18} s={1.2} c="#8a8a8a"><path d="M1 1h8v6H1z" fill="#3c86d0" /><path d="M9 1h8v6H9zM1 7h8v5H1z" /><path d="M1 12v5h8v-3" strokeDasharray="2 1" /><path d="M14 10v7M10.500 13.500h7" strokeWidth="2" /></Icon>
                      </PasteTag>
                    )}
                    {c === 'H' && r === 5 && (
                      <Pointer width="18" height="18" viewBox="0 0 18 18">
                        <path d="M6 2h5v4h4v5h-4v4H6v-4H2V6h4z" fill="#fff" stroke="#000" strokeWidth="1.600" />
                      </Pointer>
                    )}
                  </Cell>
                );
              })}
            </tr>
          ))}
        </tbody>
      </Sheet>
    </SheetView>
    <VScroll>
      <svg width="12" height="9" viewBox="0 0 12 9"><path d="M6 0l6 9H0z" fill="#666" /></svg>
      <VThumb />
      <svg width="12" height="9" viewBox="0 0 12 9"><path d="M6 9l6-9H0z" fill="#666" /></svg>
    </VScroll>
  </SheetArea>
);

const SheetTabs = () => (
  <TabsBar>
    <NavPair>
      <IconButton $w={42} aria-label="Previous sheet"><Icon w={8} h={14} s={1.6} c="#aaa"><path d="M7 1L1 7l6 6" /></Icon></IconButton>
      <IconButton $w={40} aria-label="Next sheet"><Icon w={8} h={14} s={1.8}><path d="M1 1l6 6-6 6" /></Icon></IconButton>
    </NavPair>
    <SheetTab $w={159}><span>1. Hàm tính tổng</span></SheetTab>
    <SheetTab $w={212}><span>2. Hàm tính trung bình</span></SheetTab>
    <SheetTab $w={128}><span>3. Hàm đếm</span></SheetTab>
    <SheetTab $w={120} $active><span>4. Hàm logic</span></SheetTab>
    <CutTab>5. Hàm xử</CutTab>
    <TabTools>
      <IconButton $w={34} aria-label="More sheets"><svg width="14" height="4" viewBox="0 0 14 4"><path d="M0 0h4v4H0zM5 0h4v4H5zM10 0h4v4h-4z" fill="#444" /></svg></IconButton>
      <IconButton $w={46} aria-label="New sheet"><Icon w={15} s={1.6}><path d="M7.500 0v15M0 7.500h15" /></Icon></IconButton>
      <DotsSlot $w={36}><Dots><i /><i /><i /></Dots></DotsSlot>
      <Gap $w={8} />
      <svg width="8" height="11" viewBox="0 0 8 11"><path d="M8 0v11L0 5.500z" fill="#666" /></svg>
      <HTrack><HThumb /></HTrack>
      <svg width="8" height="11" viewBox="0 0 8 11"><path d="M0 0v11l8-5.500z" fill="#666" /></svg>
      <Gap $w={28} />
    </TabTools>
  </TabsBar>
);

const Status = () => (
  <StatusBar>
    <span>Ready</span>
    <Icon w={18} h={16} s={1.5}><path d="M17 6V1H1v14h5M1 4h16M4 8h3M4 11h2" /><circle cx="12" cy="11" r="5" /><circle cx="12" cy="11" r="1.500" fill="#333" /></Icon>
    <Views>
      <ViewButton $on aria-label="Normal view"><Icon w={17} h={15}><path d="M1 1h15v13H1zM6 1v13M11 1v13M1 5.500h15M1 10h15" /></Icon></ViewButton>
      <ViewButton aria-label="Page layout view"><Icon w={18} h={15}><path d="M1 1h16v13H1zM5 3h8v9H5zM7 6h4M7 8h4M7 10h4" /></Icon></ViewButton>
      <ViewButton aria-label="Page break view"><Icon w={18} h={15}><path d="M1 1h16v13H9M1 1v8h11V1M6.500 1v8" /></Icon></ViewButton>
      <Gap $w={6} />
      <Zoom>
        <Icon w={11} h={11}><path d="M0 5.500h11" /></Icon>
        <ZoomRange type="range" aria-label="Zoom" />
        <Icon w={11} h={11}><path d="M0 5.500h11M5.500 0v11" /></Icon>
        <ZoomValue>100%</ZoomValue>
      </Zoom>
    </Views>
  </StatusBar>
);

const DIM = '#7a7a7a';
const TaskBar = () => (
  <Taskbar>
    <StartButton aria-label="Start">
      <svg width="22" height="20" viewBox="0 0 22 20"><path d="M0 3l9-1.500V9.500H0zM10 1.300L22 0v9.500H10zM0 10.500h9v8L0 17zM10 10.500h12V20l-12-1.400z" fill="#858585" /></svg>
    </StartButton>
    <TaskSearch>
      <SearchGlyph c="#888" />
      <SearchInput $dark placeholder="Type here to search" aria-label="Type here to search" />
      <svg width="76" height="32" viewBox="0 0 76 32" aria-hidden="true">
        <path d="M29 0c2 10 5 12 14 15-9 3-12 5-14 15-2-10-5-12-14-15 9-3 12-5 14-15z" fill="#9c7420" />
        <path d="M58 13c1 4 2 5 6 6-4 1-5 2-6 6-1-4-2-5-6-6 4-1 5-2 6-6z" fill="#8a5a1c" />
        <path d="M5 20c1 3 2 4 5 5-3 1-4 2-5 5-1-3-2-4-5-5 3-1 4-2 5-5z" fill="#3b6470" />
        <circle cx="50" cy="3" r="2.500" fill="#7c3a28" /><circle cx="73" cy="28" r="2.500" fill="#3d5350" />
      </svg>
    </TaskSearch>
    <TaskButton $w={66} aria-label="File Explorer">
      <svg width="28" height="24" viewBox="0 0 28 24"><path d="M0 1h11l3 3h13v19H0z" fill="#a98328" /><path d="M0 7h27v16H0z" fill="#b5974a" /><path d="M4 13h19v10h-4v-4H8v4H4z" fill="#2d5d87" /></svg>
    </TaskButton>
    <TaskButton $w={62} aria-label="Chrome">
      <svg width="30" height="30" viewBox="0 0 30 30">
        <circle cx="15" cy="15" r="14.500" fill="#a8862b" />
        <path d="M15 15L2.500 7.500A14.500 14.500 0 0 1 27.500 7.800H15z" fill="#a03a2e" /><path d="M15 15L2.500 7.500A14.500 14.500 0 0 0 14 29.500L21 18z" fill="#2b6b3c" />
        <circle cx="15" cy="15" r="7" fill="#a9a9a9" /><circle cx="15" cy="15" r="5.500" fill="#2a4aa0" />
      </svg>
    </TaskButton>
    <TaskButton $w={200} $active $left><Excel dim />excel_functions_de...</TaskButton>
    <Gap $w={3} />
    <TaskButton $w={192} $left><SiObsstudio size={30} color={DIM} />OBS 27.1.3 (64-bit, ...</TaskButton>
    <Tray>
      <Icon w={16} h={9} c={DIM} s={1.4}><path d="M1 8l7-7 7 7" /></Icon>
      <Icon w={14} h={21} c={DIM}><rect x="3" y="1" width="8" height="14" rx="1" fill={DIM} /><path d="M1 11v5h12v-5M7 16v4M3 20h8" /></Icon>
      <Icon w={20} h={18} c={DIM}><path d="M1 6h3l5-4v14l-5-4H1zM12 6c1 2 1 4 0 6M15 4c2 3 2 7 0 10" /></Icon>
      <svg width="20" height="19" viewBox="0 0 20 19"><path d="M0 0h20v19H0z" fill="#6b6b6b" /><path d="M4 4l5 11 7-12" stroke="#222" strokeWidth="2" fill="none" /></svg>
      <Icon w={24} h={13} c={DIM}><path d="M1 1h19v11H1zM20 4h3v5h-3" /><path d="M3 3h6v7H3z" fill={DIM} /></Icon>
      <span>ENG</span>
      <Clock>11:45 AM<br />2026-05-18</Clock>
      <TrayEnd><Icon w={21} h={20} c="#6a6a6a"><path d="M1 1h19v15h-6l-3 3-3-3H1z" /></Icon></TrayEnd>
    </Tray>
  </Taskbar>
);

const BARS: [number, number, number, string][] = [
  [0, 53, 339, '#3c9ae0'], [39, 88, 303, '#4a78c8'], [78, 50, 343, '#3c78cc'],
  [117, 0, 394, '#3e4eaa'], [155, 50, 343, '#3e4eaa'], [194, 88, 303, '#3e4eaa'], [233, 53, 339, '#3e4eaa'],
];
const HOLES = [[32, 196], [71, 217], [110, 165], [149, 217], [187, 176]];
const Mark = () => (
  <Watermark>
    <svg width="258" height="394" viewBox="0 0 258 394" aria-hidden="true">
      <mask id="holes"><path d="M0 0h258v394H0z" fill="#fff" />{HOLES.map(([x, y]) => <circle key={x} cx={x} cy={y} r="13.500" fill="#000" />)}</mask>
      <g mask="url(#holes)" opacity=".07">
        {BARS.map(([x, y, b, c]) => <rect key={x} x={x} y={y} width="25" height={b - y} rx="12" fill={c} />)}
      </g>
    </svg>
    <MarkName>STARTTRAIN</MarkName>
    <MarkLine>THE NEXT ANALYST</MarkLine>
  </Watermark>
);

const PlayerLayer = () => (
  <>
    <Toast>player.mediadelivery.net – To exit full screen, press <kbd>Esc</kbd></Toast>
    <Seek role="progressbar" aria-label="Playback position"><Played style={{ width: `${(1126 / 1883) * 100}%` }} /></Seek>
    <Player>
      <PlayerButton aria-label="Pause"><svg width="12" height="13" viewBox="0 0 12 13"><path d="M1 0h4v13H1zM7 0h4v13H7z" fill="#fff" /></svg></PlayerButton>
      <PlayerRight>
        <span>3:13</span><Gap $w={17} />
        <PlayerButton aria-label="Mute"><svg width="16" height="14" viewBox="0 0 16 14"><path d="M0 4.500h3L8 0v14L3 9.500H0z" fill="#fff" /><path d="M10 4c2 2 2 4 0 6M11 1c5 3 5 9 0 12" stroke="#fff" strokeWidth="1.600" fill="none" /></svg></PlayerButton>
        <Volume type="range" defaultValue={100} aria-label="Volume" />
        <PlayerButton aria-label="More"><svg width="16" height="4" viewBox="0 0 16 4"><circle cx="2" cy="2" r="2" fill="#fff" /><circle cx="8" cy="2" r="2" fill="#fff" /><circle cx="14" cy="2" r="2" fill="#fff" /></svg></PlayerButton>
        <Gap $w={20} />
        <PlayerButton aria-label="Picture in picture"><svg width="17" height="14" viewBox="0 0 17 14"><path d="M1 1h15v12H1z" stroke="#fff" strokeWidth="2" fill="none" /><path d="M8 6h6v5H8z" fill="#fff" /></svg></PlayerButton>
        <Gap $w={22} />
        <PlayerButton aria-label="Exit full screen"><svg width="14" height="14" viewBox="0 0 14 14"><path d="M0 4h4V0M10 0v4h4M0 10h4v4M14 10h-4v4" stroke="#fff" strokeWidth="2.200" fill="none" /></svg></PlayerButton>
      </PlayerRight>
    </Player>
  </>
);

export default function App() {
  return (
    <Screen>
      <Global />
      <Title />
      <MenuRow />
      <RibbonBar />
      <FormulaBar />
      <Grid />
      <SheetTabs />
      <Status />
      <TaskBar />
      <Mark />
      <PlayerLayer />
    </Screen>
  );
}
